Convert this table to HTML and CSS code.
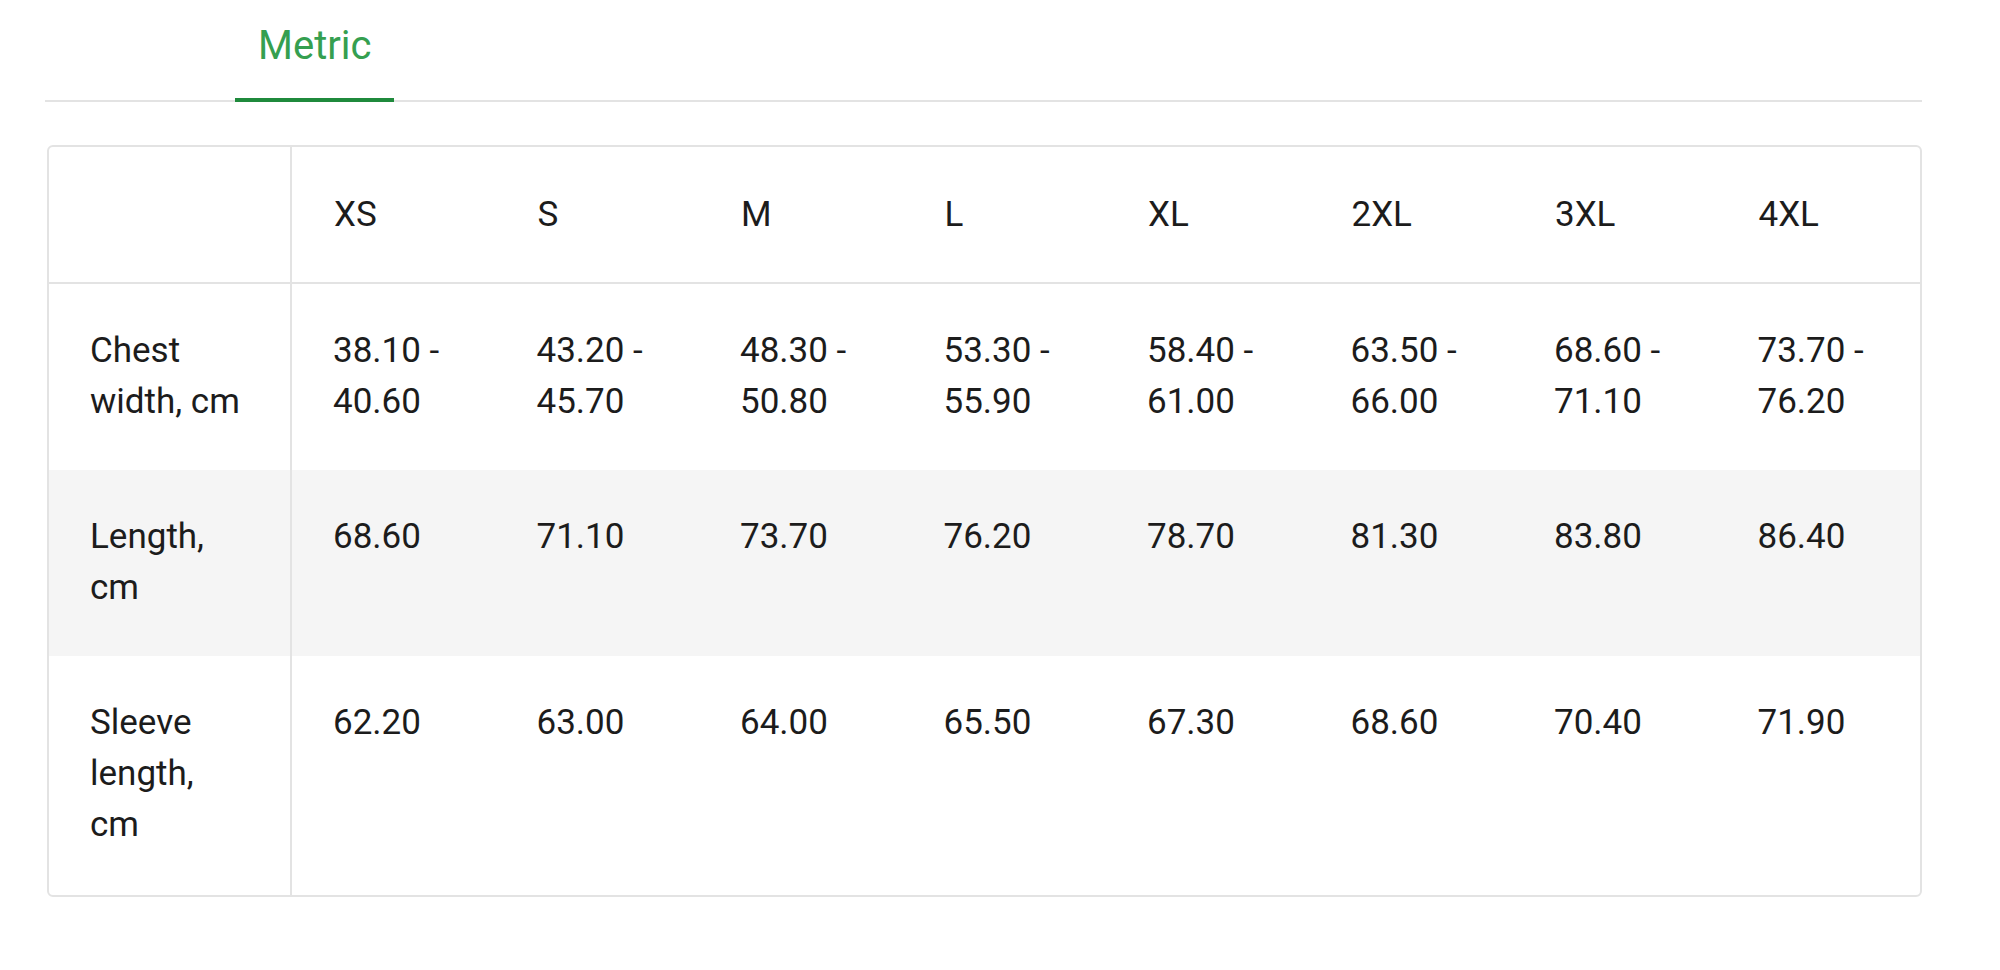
FILE: index.html
```html
<!DOCTYPE html>
<html lang="en">
<head>
<meta charset="utf-8">
<title>Size chart</title>
<link rel="stylesheet" href="styles.css">
</head>
<body>
<div class="page">
  <div class="tabs">
    <div class="tab tab-active">Metric</div>
  </div>
  <table class="size-table">
    <colgroup>
      <col class="col-label">
      <col><col><col><col><col><col><col><col>
    </colgroup>
    <thead>
      <tr>
        <th class="label"></th>
        <th>XS</th><th>S</th><th>M</th><th>L</th><th>XL</th><th>2XL</th><th>3XL</th><th>4XL</th>
      </tr>
    </thead>
    <tbody>
      <tr>
        <td class="label">Chest width, cm</td>
        <td>38.10 - 40.60</td><td>43.20 - 45.70</td><td>48.30 - 50.80</td><td>53.30 - 55.90</td><td>58.40 - 61.00</td><td>63.50 - 66.00</td><td>68.60 - 71.10</td><td>73.70 - 76.20</td>
      </tr>
      <tr class="alt">
        <td class="label">Length, cm</td>
        <td>68.60</td><td>71.10</td><td>73.70</td><td>76.20</td><td>78.70</td><td>81.30</td><td>83.80</td><td>86.40</td>
      </tr>
      <tr class="last">
        <td class="label">Sleeve length, cm</td>
        <td>62.20</td><td>63.00</td><td>64.00</td><td>65.50</td><td>67.30</td><td>68.60</td><td>70.40</td><td>71.90</td>
      </tr>
    </tbody>
  </table>
</div>
</body>
</html>
```
FILE: styles.css
```css
html, body {
  margin: 0;
  padding: 0;
  background: #ffffff;
}

body {
  font-family: Roboto, "Liberation Sans", Arial, sans-serif;
  color: #1c1c1c;
}

.page {
  padding: 0 78px 0 45px;
}

.tabs {
  display: flex;
  border-bottom: 2px solid #e3e3e3;
  padding-left: 190px;
}

.tab {
  font-size: 40px;
  line-height: 47px;
  padding: 22px 23px 29px;
  margin-bottom: -2px;
  color: #359f50;
  border-bottom: 4px solid transparent;
}

.tab-active {
  border-bottom-color: #1f8a3c;
}

.size-table {
  margin: 43px 0 0 2px;
  width: 1875px;
  table-layout: fixed;
  border-collapse: separate;
  border-spacing: 0;
  border: 2px solid #e3e3e3;
  border-radius: 6px;
  overflow: hidden;
  font-size: 35px;
  line-height: 51px;
}

.col-label {
  width: 243px;
}

.size-table th,
.size-table td {
  text-align: left;
  vertical-align: top;
  font-weight: 400;
  padding: 41px 42px 43px 41px;
  color: #1c1c1c;
}

.size-table th {
  padding: 42px 42px 42px 42px;
  border-bottom: 2px solid #e3e3e3;
}

.size-table .label {
  border-right: 2px solid #e3e3e3;
}

.size-table tr.alt td {
  background: #f5f5f5;
}

.size-table tr.last td {
  padding-bottom: 45px;
}
```
